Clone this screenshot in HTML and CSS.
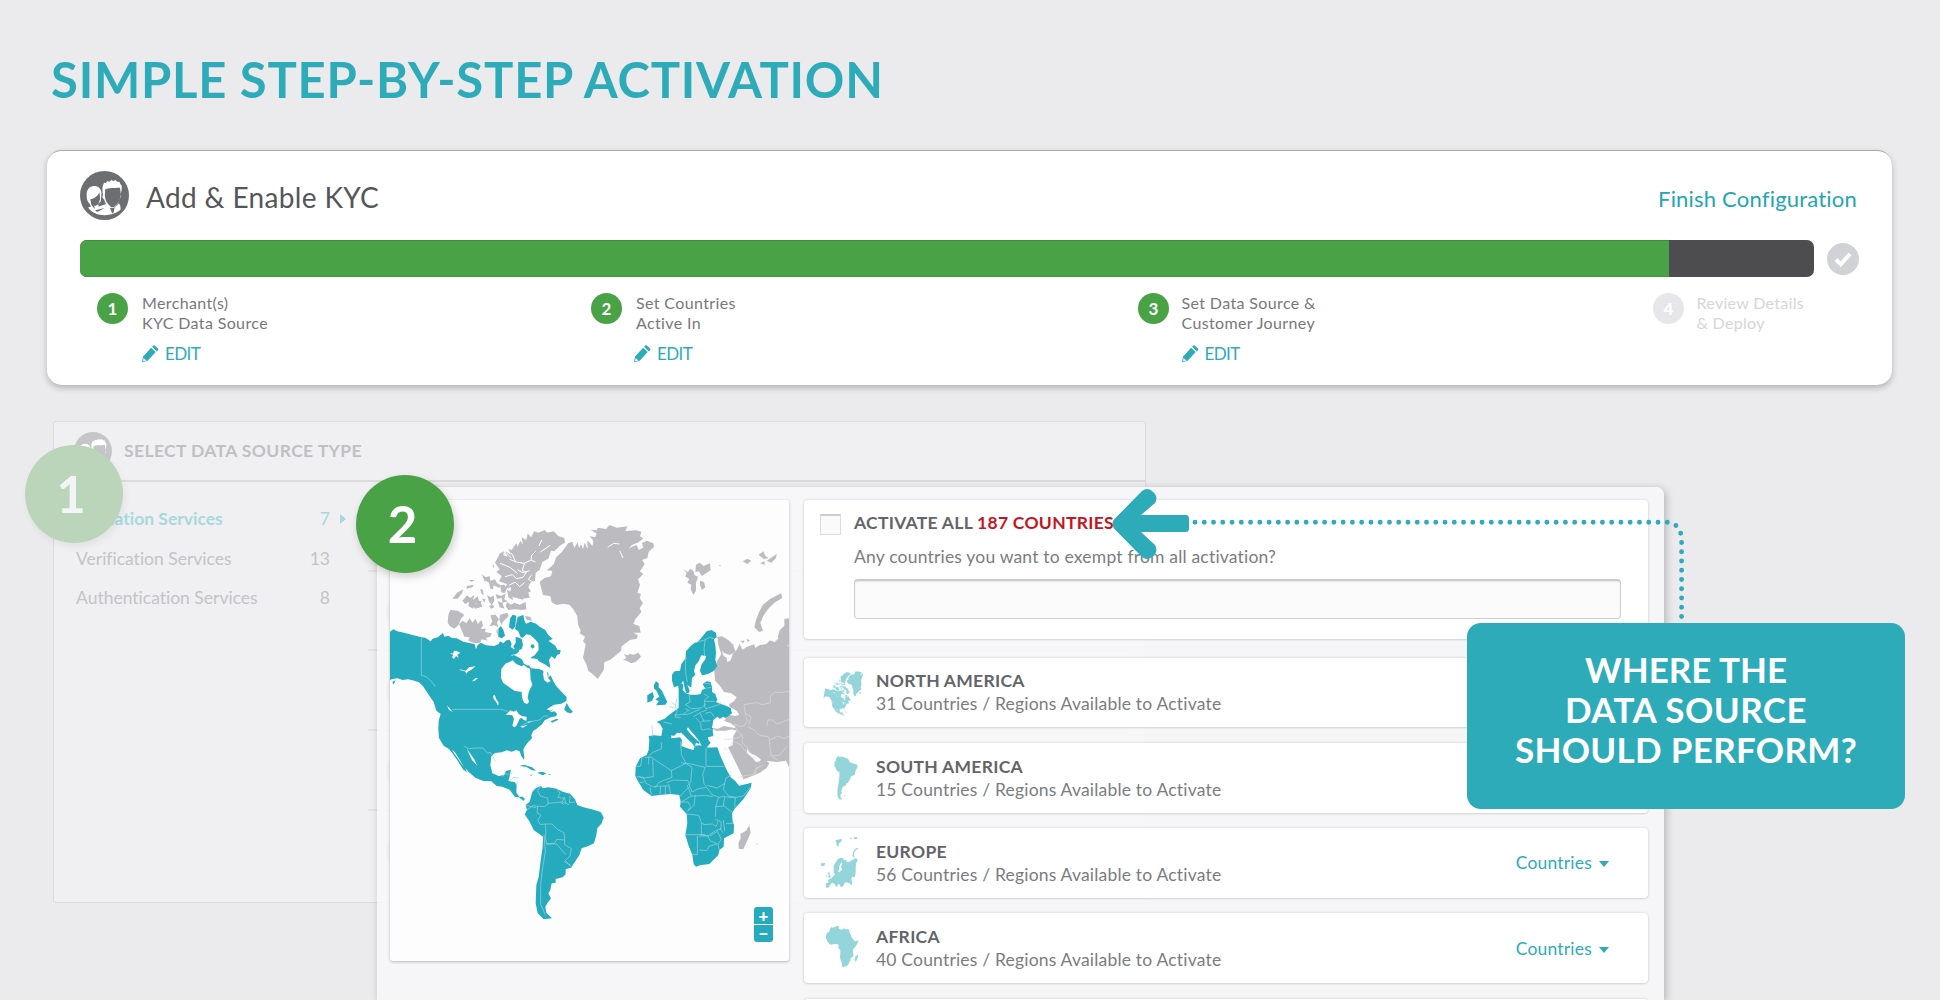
FILE: index.html
```html
<!DOCTYPE html>
<html lang="en">
<head>
<meta charset="utf-8">
<title>Simple Step-by-Step Activation</title>
<link rel="stylesheet" href="styles.css">
</head>
<body>
<svg class="defs" width="0" height="0" aria-hidden="true">
  <defs>
    <g id="pencil">
      <path d="M1 10.800 8.600 2.600l4.300 4-7.600 8.200L0 16.200zM9.500 1.700 10.600.5q.7-.7 1.500 0l3 2.800q.7.7.1 1.400l-1.200 1.300z"/>
      <path d="M1.500 12.200l2.600 2.400-3 .8z" fill="#fff"/>
    </g>
    <g id="people">
      <circle cx="103" cy="106" r="73"/>
      <g fill="#fff">
        <path d="M50 108C49 88 58 77 75 78c11 1 18 9 19 21l-2 24-8 9 2 5-10 6-12-2-6-11c-6-6-8-14-8-22z"/>
        <path d="M99 104c-4-14-2-29 3-36l5 1 4-6 6 2 6-5 6 3 7-3 5 5 7 1 2 6 4 4c1 9 0 18-4 28 5 2 2 9-2 12-3 12-9 21-20 30h-8c-10-9-16-17-18-28-5-3-7-10-3-14z"/>
        <path d="M54 142l20-8 12 5 22-8 18 18 20-19c5 3 5 14 5 18-10 10-28 17-48 17s-38-7-49-23z"/>
      </g>
      <path d="M105 88c9-5 26-4 44-5l3 21c-2 15-8 26-21 37h-8c-12-10-18-20-19-34z"/>
      <path d="M60 118c14-3 22-10 28-22l2 20-5 15-9 6-10-4zM62 124l10 10 2 12-10-12zM119 143h14l-3 14-4 3zM75 150l29-7-23 12z"/>
    </g>
    <g id="na-land">
      <path d="M15 335l10-7 12 6 20 4 52 14 12 1 16 11 6-8 16-4 10-9 5-4 4 11 12-3 10 7 15 1 20 10 22 5 12 3 4 15 5-13 10-7 14 8 26 2 13-6 4-8 10 6 9-9 10-1 6 11-3 10 10 7 12-4 4 10-11 9-14 2 15 14 18 8 14 9 25 2 14-2 9 12 4 13 10-6 4 9-2 9 8-7 8 18 8 13 12 14 14 14 6 6-1 12-15 8-22 3-22 14 12 4 24-13 14-2-14 22-8 10-16 3-18 9-8 12-17 14-9 5-6 13 2 10-12 12-11 15-3 8 3 22-1 8-8-12-5-14-10-4-14 5-14-4-16 6-20 2-11 10-3 27 6 24 19 8 16-3 6-12 15-4-5 24-3 10 20 4 5 9-1 22 9 12 10 0 7 7-5 5-13-10-12-1-16-22-22-9-17-2-16-14-24-1-24-10-19-16-14-15-15-24-13-21-10-8 22 32 20 26 4 10-11-8-18-28-14-20-11-14-16-10-14-23-2-28 1-24 6-20-13-10-8-26-18-26-14-21-12-12-19-6-14-3-16 2-16-5-18 3-16 14-12 13-10 14z"/>
      <path d="M535 566l10-18 7 14 12 14-8 4-10-3zM497 604l18-8 6 3-20 9zM403 738l14-4 24 8 12 10-12-1-18-11zM456 758l16-3 12 5-10 6zM433 764l10 0-4 3zM490 763l8 0-5 3z"/>
      <path d="M150 505l5 6 4 14-6-5zM140 490l8 6-2 8-6-7zM22 486l10-6-6 14z"/>
      <path d="M372 322l3-26 8-12 11 3-3 32-8 10zM392 318l6-27 17-6 3 16 5 10 14-6 16 6 12 10 16 9 8 14 14 12-12 7 20 14 6 12 10 2-2 10-9 4-6 12-10-8-8 10 4 24-14-6-18-8-7-12-20-2 8-14 10-8-12-20-14-15-22-6-7-18-10-7zM340 326l8-8 8 14 4 15-9 8-11-4zM392 350l18 6 4 18-4 14-17 4-8-12 7-12zM365 412l22-7 24 13 5 11-17-1-22-6z"/>
    </g>
    <g id="na-water">
      <path d="M349 447l12-16 14-6 8-4 10 10 16 8 8-4 10 8 8 3 2 32 5 16-10 20-4 18 4 14-6 6-9-4-6-16-1-16-22-4-20-14-14-10-6-14zM412 355l12-12 12 2 14 13 10 12 1 20-12 16-14 8-14-4-4-16 9-12-7-12zM425 425l16-8 24 8 18 10 22 18-3 5-20-3-20-8-24-2zM474 458l12-3 3 18 8 10-9 5-11-8zM192 398l12 3 3-9 9 2 10 4-9 6 4 10-8-6-6 9-6-6 4-6zM224 448l18 4 10-10 20-3-14 11-8 4-6 7-4-7-16-4zM261 484l10-9 8-1-10 9zM324 528l5-4 5 14 7 10-2 9-6-12-7-8zM362 584l14-13 10 4 8-4 8 12 10 6 13 1-1 12-8-2-6-6-6 2-8 18-6 8-8-4 5-22-5-10-8-1zM406 620l22-6-14 9zM424 606l20-3-12 5zM500 572l14-15 16-2 16-9-10 26-8 16-14 3 2-10-8-7-14 3z"/>
      <path d="M245 686l22 30 10 22-16-18zM186 556l14 16 4 4-12-6z"/>
    </g>
    <g id="greenland">
      <path d="M464 186l14-12 20-5 4-16-16-2 20-18 8-22 16-14 20-28 12-4 6 18 10-16 4 18 6-13 6 16 5-20 9 20-1-27 15 17 4-14-12-16 16 4 5-11-18-12 18 2 4-8 24 4 10-12 22 8 32-4-6 14 32-2 16 4-4 14 10 6-14 12-20 8-10 10 24-10 6 14 14-6-4-14 14-7 20 8 2 10-16 16-4 18-16 6 8 12-14 22 10 8-16 16 6 17-8 23 11 4-4 12 10 16-10 14 5 12-18 22-6 14 18 6 4 20-22 0 14 8-4 10-20 4-25 19-2 14-22 18-10 8-18 8-2 24-10 14-8 12-16-16-12-8-6-20-10-20 4-20 4-21-8-8 6-14-16-10 3-8-8-18-2-25-12-21-12-14-18-3-20 4-15-8-4-18-22-4z"/>
      <path d="M717 402l10 4 8-4 12 2 14-6 7 12-16 16-14 4-10-6-14-5 10-4z"/>
    </g>
    <g id="arctic">
      <path d="M345 100l12-6-2 12 13 4-8-16 18 10-8-18 10 4 14-20 4 10 8-18 8 12-4-22 14 8 4-20 10 12 10-18 12 4 20-8 6 8 20-4 14 14 18 6 2 14-14 8-18 18-10-2-8 24-18 10-8 24-12 8-2 24-14 6-6 14 8 12-22 10-2 16-18-8-6-16-14 4 2-18-18 4 6-14-24-8 8-16-16-12 10-8-14-20z"/>
      <path d="M190 284l6-14 22 2 20 12-10 12-8 20-12 10-14-8-6-10zM222 312l12-10 10 8 10-16 8 14 10-12 6 16 12-12 4 18-8 8 16 0-2 10 20 4-4 10-14 4 6 8-18-4-4 10-18 2-18-8 4-10-16-2z"/>
      <path d="M316 286l16-2 10 14-6 10 4 14-12-6-14 2 8-14zM345 284l22-6 4 10-14 14-8 12-6-14zM420 288l16 2 5 12-16-2zM366 246l12 8 10-6 16 6 18-8 2 22-14 2-20-2-20 2-8-12zM380 212l18 8 14-8 18 6 4 16-30 2-24-6zM232 242l14-16 10 8 12-10-4 16 14-12 4 14 8 2-4 12-14-6-8 16-14-8 2-12-12 6zM202 236l14-18 18-10-2 10-14 18zM306 226l12 6 8-6 2 16-8 14-8-12zM332 222l16 6 14-8-4 18 10 6-16 4-2-14-14 2zM290 162l12 10 12-4 2 14 14-4 6 12 12 6-6 8-16-8-2 12-8-2-4-18-10-6-2 4zM246 198l20-4-4 8-18 4zM252 180l16 0-8 6zM322 136l6 10-2-12zM286 206l8 4 2 18-8-10z"/>
      <path d="M346 196l12-2 8 12-8 14-10-4zM400 180l12-4 18 10-6 22-16 4-8-16z"/>
      <path d="M338 244l14 4 6 18-14-4zM262 254l26-4 4 10-22 6zM366 210l14 6 4 24-14-8zM340 352l-6-20 4-4zM292 236l10 2-4 10zM376 190l14-4 8 24-14 2zM312 258l12-4 4 8-10 4z"/>
    </g>
    <path id="sa-land" d="M487 935l10-10 16-8 5 8 17-3 25 4 18 9 22 6 15 17 7 17 18 7 25 6 27 8 9 16-6 18-13 15-3 20-7 25-17 8-20 7-7 20-13 20-12 18-16 5 0 15-9 9-21 5 0 11-12 2-4 20-6 10 8 15-11 15-6 10 3 18 17 17-25 3-18-18-6-30 2-55 7-25 5-40 7-50 1-30-28-20-12-25-15-22 7-13-4-15 12-10 4-15z"/>
    <g id="africa-land">
      <path d="M163 603l17 4 35-12 25-3 6 8-2 18 18 7 18 5 5-13 15-1 20 7 32-1 8 23 20 45 12 22 13 10 8 10 5 5 37-9-3 17-22 33-25 27-9 15 2 25 4 10-1 25-29 15-1 25-13 10-3 15-27 27-28 4-12 4-7-8-4-27-12-30-9-30 6-35-2-28-20-22 2-15-4-20-26-3-27 2-30 4-25-18-17-28-7-14 1-28 13-25 20-10 8-20z"/>
    </g>
    <path id="madagascar" d="M448 856l4 22-12 28-10 22-13-2-2-16 7-16-1-12 17-10z"/>
  </defs>
</svg>

<header class="page-head"><h1>SIMPLE STEP-BY-STEP ACTIVATION</h1></header>

<section class="wizard">
  <div class="wizard-head">
    <svg class="ico-people" viewBox="30 33 146 146" fill="#6d6e72"><use href="#people"/></svg>
    <h2>Add &amp; Enable KYC</h2>
    <a class="finish">Finish Configuration</a>
  </div>
  <div class="progress">
    <div class="bar"><div class="fill"></div></div>
    <svg class="check" viewBox="0 0 32 32"><circle cx="16" cy="16" r="16" fill="#d1d2d5"/><path d="M9 16.500l4.700 4.800L23 11" fill="none" stroke="#fff" stroke-width="4"/></svg>
  </div>
  <ol class="steps">
    <li class="step s1"><b>1</b><div><p>Merchant(s)</p><p>KYC Data Source</p><a><svg viewBox="0 0 16 16"><use href="#pencil"/></svg>EDIT</a></div></li>
    <li class="step s2"><b>2</b><div><p>Set Countries</p><p>Active In</p><a><svg viewBox="0 0 16 16"><use href="#pencil"/></svg>EDIT</a></div></li>
    <li class="step s3"><b>3</b><div><p>Set Data Source &amp;</p><p>Customer Journey</p><a><svg viewBox="0 0 16 16"><use href="#pencil"/></svg>EDIT</a></div></li>
    <li class="step s4"><b>4</b><div><p>Review Details</p><p>&amp; Deploy</p></div></li>
  </ol>
</section>

<main class="stage">
  <section class="source-panel">
    <header>
      <svg class="ico-people-sm" viewBox="30 33 146 146" fill="#c6c6c9"><use href="#people"/></svg>
      <h3>SELECT DATA SOURCE TYPE</h3>
    </header>
    <div class="source-body">
      <ul>
        <li class="active"><span>Validation Services</span><em>7</em><i></i></li>
        <li><span>Verification Services</span><em>13</em></li>
        <li><span>Authentication Services</span><em>8</em></li>
      </ul>
      <div class="source-rows"><div></div><div><i></i></div><div><i></i></div><div><i></i></div><div><i></i></div></div>
    </div>
  </section>
  <div class="badge badge-1">1</div>

  <section class="country-panel">
    <div class="map-card">
      <svg class="map" viewBox="60 60 1197 1383">
        <g fill="#bcbbc0" transform="translate(45 120)"><use href="#greenland"/><use href="#arctic"/></g>
        <g fill="none" stroke="#fff" stroke-width="3" transform="translate(45 120)">
          <path d="M374 118l20 8 24 4 20-10 14 6M392 126l-8-18-6-10M418 130l-6 22 14 4M438 120l2-14 12-12M365 100l14 14M345 130l30 12 22 18M360 170l22-6 12 12 20-4 12-18M372 196l18-10 14 14 14-12M470 60l-8 18M496 76l-30 20M668 82l18-12 18 2M704 92l10 22M560 300l12 8M398 150l16 8 20-6M440 164l-10 14 14 8"/>
        </g>
        <g transform="translate(45 120)">
          <g fill="#26aabd"><use href="#na-land"/></g>
          <g fill="#fff"><use href="#na-water"/></g>
          <path fill="#26aabd" d="M438 374l8-1 3 8-6 5-6-5z"/>
          <path class="borders" d="M109 352v114l14 4 16 14 12 16M202 568h146l20 6M406 620l24-14 34-6 12-12 14 0M236 678l14 8 22-2 22 0 14 16 8-4 16 28M352 770l8-8 16 1 6-6M376 782l10-10 14 2M392 796l8-8"/>
        </g>
        <use href="#sa-land" fill="#26aabd"/>
        <path class="borders" d="M513 918l-10 14 8 16 22 6 2 18-12 8M560 926l10 14-6 12 18 4-8 12 8 6M582 950l6 20M600 948l-2 20 18-2M523 980l-20-2-2 20 12 8-10 14 8 14 15-2M533 970l44-4 20 8M466 975l14 4 18 4M470 990l20-14 12 4M526 1032l20 0 16 16 20 10 2 22-24-2-6 12-24 2-4-20 2-14-2-26M584 1080l0 14 20 12-4 22-14 14 20 22M530 1092l30 0 10 12 18 20M582 1144l20 12M522 1064l4 50-8 50-6 50 0 60 8 16 6 16"/>
        <g transform="translate(690 180)">
          <g fill="#bcbbc0">
            <path d="M352 291l14-2 20 12 14 14 6 20-16 10-18-6-6-8 4 16 10 6 2 14 10-6 6-18 14-16 6-16 10 18 12-8 22-8 4 10 14-8 18-2 12-12 14 6 12-12 12 12 12-2 4 14 12-4v255l2 115-8 5-6-16-6-12-28 4-34-4-12-2-14-12-18-8-12-14 2 14 16 14 10 12 12-2 6-12 22 18-8 14-20 14-38 16-12 4-8-20-14-28-12-24-12-24 14-6 2-28 10-16-14-4-20 4-28 0-14-10 2-14-4-8 26-8 26-8 22 4 12-4-8-12-22-12 0-8 14-8 8-12-16-12-22-4-12-18-14-16-4-36 8-8 2-16 12-20-10-30z"/>
            <path d="M543 160l4 14-24 14-18 18-14 20-10 22 8 24-12 4-14-14 4-18 10-28 12-22 20-16zM567 235l-14 2 0 20-14 14-6 22 14 14 20 10zM250 88l14 8 6-10 10 6 4 14 10 4-6 18 0 24-8 13-8-17 2-14-12-6 6-12-12-6 4-12zM288 74l12-6 10 10 20-8 2 20-14 10-12 8-10-14-10 2zM300 122l12 4 4 16-10 8-6-14zM428 64l14-8 12 6-12 10zM476 44l14-10 6 14 10 6-14 4zM480 70l14-6 0 10zM500 62l16-10 14-10-2 12-14 14zM355 75l10 0-5 3zM420 302l14 0-4 8zM440 296l10 6-8 4zM470 908l4 4-4 2zM482 904l4 3"/>
            <use href="#madagascar"/>
          </g>
          <g fill="none" stroke="#dcdbdf" stroke-width="2">
            <path d="M402 552l20 8 12-4 8-14-6-20-4-28 20-4 20-2 14 6 26-6-2-18 14-14 18 2 22-4 8 6M500 560l4-20 14 0 14 12 14-6 22-8M442 560l22 10 14 16 26 4 6 10 22-12 20 8 16-8M404 556l12 22 12 8-2 22 16 14 6 16M372 598l20 0 26-6 6-8M384 624l18-20 20 10 18 24M372 624l10 6M414 712l24-6 20-2 10-14 10-10M464 702l4-18 20-8M508 600l2 22 4 26 18 12M514 648l24-2 22-26M436 518l18 14-8 22"/>
          </g>
          <g fill="#26aabd">
            <path d="M320 274l14-4 14 8 2 14-8 6 4 18 2 22-2 22 6 18-12 16-18 9-16 3-6-14 4-18 12-16 2-10-14-2-8 18-10 12-4 18 4 10-10 10-2 26-8 20-8-2-6-22-2-14-10 14-18 6-6-20 0-18 8-10 16-2 4-20 12-16 2-22 12-14 12-10 10-4 10-10z"/>
            <path d="M236 448l-2-12 12-6 4 6-2 14 10 10 12 4 22 0 10-2 4-12 10-4-8-14 12-8 12 2 4 16 0 14 10 6 6 18-4 6 14 6 12 4 18 8 4 16-16 12-16 4-4 8 8 4-8 4-10-8-8 12-4 16 2 16-16 4 0 6 8 10-10 12 2 12-12 0-8-16-6-12-14-18-12-14-8-10-4 6 12 14 14 14 12 10 0 6-10-4-4 12-8-10-14-14-12-12-8-8-12 4-8 8-8-2 0 12-10 8-2 14-16 14-18 4-10-4-6-2-6-4 2-28-2-12 16-2 22 2 4-22-8-14-10-6 14-6 10-4 12-10 10-8 8-6 12-8zM236 552l6 0 0 14-6-2zM236 568l7 2-1 10-6-2zM258 588l16-2-4 8zM142 466l16-10 4 14-6 12-14 6zM162 434l6-10 8 6 0 12 10 10 6 14 10 20-6 8-28 2 8-12-10-6 12-8-10-20-6-4z"/>
            <use href="#africa-land"/>
          </g>
          <path fill="#fff" d="M340 540l12-10 8 6 10-6 8 6-6 6 20 8 14 10-2 4-32-6-18 8-18-2zM262 435l18 12 10-8 8 6-2 12-24 2z"/>
          <path class="borders" d="M258 350l-2 26 2 30 4 20M316 296l-4 30 2 22M284 308l30-8 14-8 14 4M314 430l18 2M310 446l24-4M312 462l14 8-12 10 0 20 4 8M314 484h30M318 506l40-12 4-8M268 466l2 20-14 8 18 12 30-2 14-12M230 476l-4 26 6 12-6 12 24-4 14-10M190 546l26 6M206 500l20 4M216 488l12 8M250 524l16-2 14-6 20-8M280 530l24-14 16-6M226 522v10h16M300 520l12 24M288 534l14 16 2 20M304 544l28-2M316 520l16-4 12 16M306 570l20-4 8 4M156 556l2 34M256 506l14 6"/>
          <path class="borders" d="M184 607l0 20-26 10-12 14 0 22M134 652h20l60 40 44-22-14-26-2-40M158 658l2 52-30 4-12-4M108 680l14-2 4-26M214 692l2 20-22 8-18 8-12 16M244 668l28 4 44 10M318 623v56h56M260 672l16 10-4 46-10 10 4 8M316 682l-8 20 4 30 8 8M110 710l20 2 8 18 20 10M118 728l14-2M150 742l4 22M160 740l22-2-2 26M184 738h22M196 738v24M206 732l6 30M200 728l20-8 44 2 6 16-20 20-10 12M270 740l6 16 20-10 24-4 16 22 20 8 20-4M322 736l30 8 22-14 4-16 16-8M374 730l-4 18 16 20 22 4 22-4 22-28M266 746l8 22-30 18M274 768h12l30-2 22 4M286 766l-4 30-18 18M244 786h20l8 14-10 14M260 822l36 4 8 22 8 6 26-2 10 8 6-16M346 800l26-2 10 8 20 14M356 772l-8 24-2 34M374 770l-4 28M376 770l30 4-2 28M256 884h60M304 848v36l20 4 22-16 18-6M292 888l0 56-16-2M296 888l28 0 6 14 22 10-24 6-8 14-22-2M346 838l18 8-2 24 8 8M378 850h24M370 840l4 34M330 888l22-14 12 24-10 14M354 912l4 20"/>
        </g>
      </svg>
      <div class="zoom"><button>+</button><button>−</button></div>
    </div>

    <div class="regions">
      <div class="card activate">
        <span class="box"></span>
        <div class="activate-body">
          <p class="strong">ACTIVATE ALL <span class="red">187 COUNTRIES</span></p>
          <p class="sub q">Any countries you want to exempt from all activation?</p>
          <div class="input"></div>
        </div>
      </div>
      <div class="card region">
        <svg class="ico" viewBox="42 25 150 210" fill="#93d5da"><g transform="translate(76 65) scale(.145 .165)"><use href="#na-land"/><use href="#arctic"/><use href="#greenland"/><g fill="#fff"><use href="#na-water"/></g></g></svg>
        <div class="txt"><p class="strong">NORTH AMERICA</p><p class="sub">31 Countries / Regions Available to Activate</p></div>
      </div>
      <div class="card region">
        <svg class="ico" viewBox="42 281 150 210" fill="#93d5da"><use href="#sa-land" transform="translate(-33 22) scale(.298 .325)"/><path d="M134 438l6 0-2 3z"/></svg>
        <div class="txt"><p class="strong">SOUTH AMERICA</p><p class="sub">15 Countries / Regions Available to Activate</p></div>
      </div>
      <div class="card region">
        <svg class="ico" viewBox="42 537 150 210" fill="#93d5da"><path d="M65 643l6 0 7-1-2 8-8 1zM108 575l8-3 6-1 7 0-2 7-7 4-2 12-5-6-1-8zM150 569l7-3 2 4zM162 567l6-2 7-1-1 5-6 2zM180 596l-8 6-6 8-1 12 3 4-6-2-2-6 4-12 7-8zM86 672l5-3 1 8 4 8-8 2 1-8zM81 680l4-1-1 7z"/><path d="M104 650l5-8 6-10 8-6 10 2 2 6 9 0-2 6 9-2 8-4 10-6 6 2 0 6-4 6-1 16 0 12-2 14-9-1-2 8 3 10-3 8-6-6-7-3-7 1-3 8-6 6-5-4-1-6-6 2-4 8-5-10-7-4-5 4-6 10-7 2-2-6 1-8 8-2-2-8 10-5 6-7 5-4-4-8z"/><path d="M121 651l7-12 2 5-4 9 4 9-6 5-7 3 3-8z" fill="#fff"/></svg>
        <div class="txt"><p class="strong">EUROPE</p><p class="sub">56 Countries / Regions Available to Activate</p></div>
        <a class="link">Countries<i></i></a>
      </div>
      <div class="card region">
        <svg class="ico" viewBox="42 792 150 210" fill="#93d5da"><g transform="translate(51.500 643.500) scale(.278 .317)"><use href="#africa-land"/><use href="#madagascar"/></g></svg>
        <div class="txt"><p class="strong">AFRICA</p><p class="sub">40 Countries / Regions Available to Activate</p></div>
        <a class="link">Countries<i></i></a>
      </div>
      <div class="card region"></div>
    </div>
  </section>
  <div class="badge badge-2">2</div>

  <svg class="pointer" viewBox="1100 480 600 150" width="600" height="150">
    <path fill="none" stroke="#2eabb9" stroke-linecap="round" stroke-width="4.900" stroke-dasharray="0 9.260" d="M1195 522.300H1667q14.600 1 14.600 19V618"/>
    <path fill="#2eabb9" d="M1114 519.500l28-28.500q5-4 10 0 7 5 3 12l-14 12h45q3 0 3 4v9q0 4-3 4h-45l14 13q4 7-3 12-5 4-10 0l-28-28.500q-3-4.500 0-9z"/>
  </svg>
  <aside class="callout"><p>WHERE THE</p><p class="wide">DATA SOURCE</p><p class="mid">SHOULD PERFORM?</p></aside>
</main>
</body>
</html>
```
FILE: styles.css
```css
* { box-sizing: border-box; }
body {
  margin: 0; width: 1940px; height: 1000px; overflow: hidden;
  display: flex; flex-direction: column;
  background: #ebebed; color: #6b6c70;
  font-family: Lato, "Open Sans", sans-serif;
  font-variant-ligatures: none;
}
h1, h2, h3, p, ul, ol { margin: 0; padding: 0; list-style: none; font-weight: 400; }
.defs { position: absolute; }

.page-head { height: 150px; padding: 49px 0 0 51px; }
.page-head h1 { font-size: 49px; line-height: 60px; font-weight: 700; color: #2eabb9; white-space: nowrap; letter-spacing: .75px; }

.wizard {
  width: 1845px; height: 235px; margin-left: 47px; padding: 20px 33px 0;
  background: #fff; border-radius: 15px; border-top: 1px solid #a8a9ac;
  box-shadow: 0 3px 6px rgba(0,0,0,.24);
}
.wizard-head { display: flex; align-items: center; height: 49px; }
.ico-people { width: 49px; height: 49px; }
.wizard-head h2 { margin-left: 17px; font-size: 28px; line-height: 34px; padding-top: 2px; color: #55565a; letter-spacing: .35px; }
.finish { margin-left: auto; margin-right: 2px; padding-top: 6px; font-size: 22px; color: #22a5b5; letter-spacing: .2px; }
.progress { display: flex; align-items: center; gap: 13px; height: 37px; margin-top: 20px; }
.bar { width: 1734px; height: 37px; border-radius: 7px; background: #4d4d4f; overflow: hidden; }
.fill { width: 1589px; height: 37px; background: #49a346; box-shadow: inset 0 2px 0 -1px #3b8f3c, inset 0 -2px 0 -1px #419a40; }
.check { width: 32px; height: 32px; }
.steps { display: grid; grid-template-columns: 494px 547px 515px 1fr; padding: 16px 0 0 17px; margin-right: -20px; }
.step { display: flex; gap: 14px; }
.step b {
  width: 31px; height: 31px; border-radius: 50%; background: #49a346; color: #fff;
  font-size: 17px; line-height: 31px; text-align: center; font-weight: 700;
}
.step p { font-size: 16px; line-height: 20px; white-space: nowrap; letter-spacing: .37px; color: #77787c; }
.step a { display: flex; align-items: center; gap: 6px; margin-top: 10px; font-size: 17px; line-height: 22px; color: #2eabb9; letter-spacing: -.6px; }
.step a svg { width: 17px; height: 17px; fill: #2eabb9; overflow: visible; position: relative; top: -1px; }
.s2 a { margin-left: -2px; }
.s3, .s4 { gap: 12.500px; }
.s4 b { background: #e7e7e9; }
.step.s4 p { color: #d6d6d9; letter-spacing: .3px; }

.stage { position: relative; flex: 1; min-height: 0; overflow: hidden; }

.source-panel {
  position: absolute; left: 53px; top: 36px; width: 1093px; height: 482px;
  border: 1px solid #dbdbdd; border-radius: 3px; background: #f0f0f2;
}
.source-panel header { display: flex; align-items: center; height: 60px; border-bottom: 2px solid #dbdbdd; padding-left: 20px; }
.ico-people-sm { width: 38px; height: 38px; }
.source-panel h3 { margin-left: 12px; font-size: 17.500px; font-weight: 700; color: #c0c0c3; letter-spacing: .38px; position: relative; top: -1px; }
.source-body { display: flex; }
.source-body ul { width: 314px; padding: 17px 0 0 22px; }
.source-body li { display: flex; align-items: center; height: 39.500px; font-size: 17.500px; color: #c3c3c6; }
.source-body span { flex: 1; }
.source-body em { font-style: normal; width: 40px; text-align: right; margin-right: 38px; }
.source-body .active { color: #a8d8dd; }
.source-body .active span { font-weight: 700; letter-spacing: 0; }
.source-body .active em { margin-right: 10px; }
.source-body li i { border-left: 6px solid #a8d8dd; border-top: 5px solid transparent; border-bottom: 5px solid transparent; margin-right: 22px; }
.source-rows { flex: 1; padding: 10px 17px 0 0; }
.source-rows div { height: 79.700px; border-bottom: 2px solid #e3e3e6; padding: 15px 0 0 18px; }
.source-rows div:last-child { border: 0; }
.source-rows i { display: block; width: 50px; height: 50px; border-radius: 50%; background: #c6c6c9; }

.badge {
  position: absolute; width: 98px; height: 98px; border-radius: 50%;
  color: #fff; font-size: 51px; line-height: 97px; text-align: center; font-weight: 700; padding-right: 4px;
}
.badge-1 { left: 25px; top: 60px; background: #bad5ba; color: #f3f4f4; box-shadow: 2px 4px 7px rgba(0,0,0,.06); padding-right: 6px; }
.badge-2 { left: 355.500px; top: 90px; background: #49a346; box-shadow: 2px 4px 8px rgba(0,0,0,.18); }

.country-panel {
  position: absolute; left: 377px; top: 101.500px; width: 1287px; height: 513.500px; overflow: hidden;
  display: flex; gap: 15px; padding: 13px 16px 0 13px;
  border-radius: 8px 8px 0 0; background: rgba(248,248,250,.86);
  box-shadow: 2px 2px 8px rgba(0,0,0,.24);
}
.map-card { position: relative; width: 399px; height: 461px; background: #fdfdfe; border-radius: 3px; box-shadow: 0 1px 3px rgba(0,0,0,.26); }
.map { display: block; width: 399px; height: 461px; }
.borders { fill: none; stroke: #9bd6de; stroke-width: 2; }
.zoom { position: absolute; right: 16px; bottom: 19px; width: 19px; display: grid; gap: 1px; }
.zoom button { border: 0; padding: 0; height: 17px; background: #26aabd; color: #fff; font: 900 17px/15px Lato, sans-serif; }
.zoom button:first-child { border-radius: 3px 3px 0 0; }
.zoom button:last-child { border-radius: 0 0 3px 3px; }

.regions { flex: 1; display: flex; flex-direction: column; gap: 15.500px; }
.card { flex: none; background: #fff; border-radius: 4px; box-shadow: 0 0 3px rgba(0,0,0,.16), 0 1px 2px rgba(0,0,0,.08); }
.activate { height: 139px; margin-bottom: 3.500px; display: flex; padding: 11px 27px 0 16px; gap: 13px; }
.box { width: 21px; height: 21px; margin-top: 3px; background: #fafafa; border: 1px solid #dcdcde; border-top: 2px solid #cfcfd1; }
.activate-body { flex: 1; }
.strong { font-size: 17.500px; line-height: 23px; font-weight: 700; color: #64656a; white-space: nowrap; letter-spacing: .28px; }
.red { color: #c4161c; }
.sub { font-size: 17.500px; line-height: 23px; color: #7b7c80; white-space: nowrap; letter-spacing: .19px; }
.q { margin-top: 11px; }
.input { margin-top: 11.500px; height: 40px; border: 1px solid #cfcfd2; border-top: 2px solid #cacacc; border-radius: 4px; background: #fbfbfb; box-shadow: inset 0 1px 2px rgba(0,0,0,.08); }
.region { display: flex; height: 69.800px; align-items: center; padding: 0 39px 0 9px; }
.ico { width: 50px; height: 70px; margin-right: 13px; }
.txt { flex: 1; }
.link { display: flex; align-items: center; gap: 7px; font-size: 17.500px; color: #2eabb9; letter-spacing: .2px; }
.link i { border-top: 6px solid #2eabb9; border-left: 5.500px solid transparent; border-right: 5.500px solid transparent; margin-top: 3px; }

.pointer { position: absolute; left: 1100px; top: 95px; }
.callout {
  position: absolute; left: 1467px; top: 238px; width: 438px; height: 186px; padding-top: 26px;
  background: #2eabb9; border-radius: 14px; color: #fff; text-align: center;
  font-size: 35px; line-height: 40px;
}
.callout p { font-weight: 700; white-space: nowrap; }
.callout .wide { letter-spacing: .5px; }
.callout .mid { letter-spacing: .3px; }
```
